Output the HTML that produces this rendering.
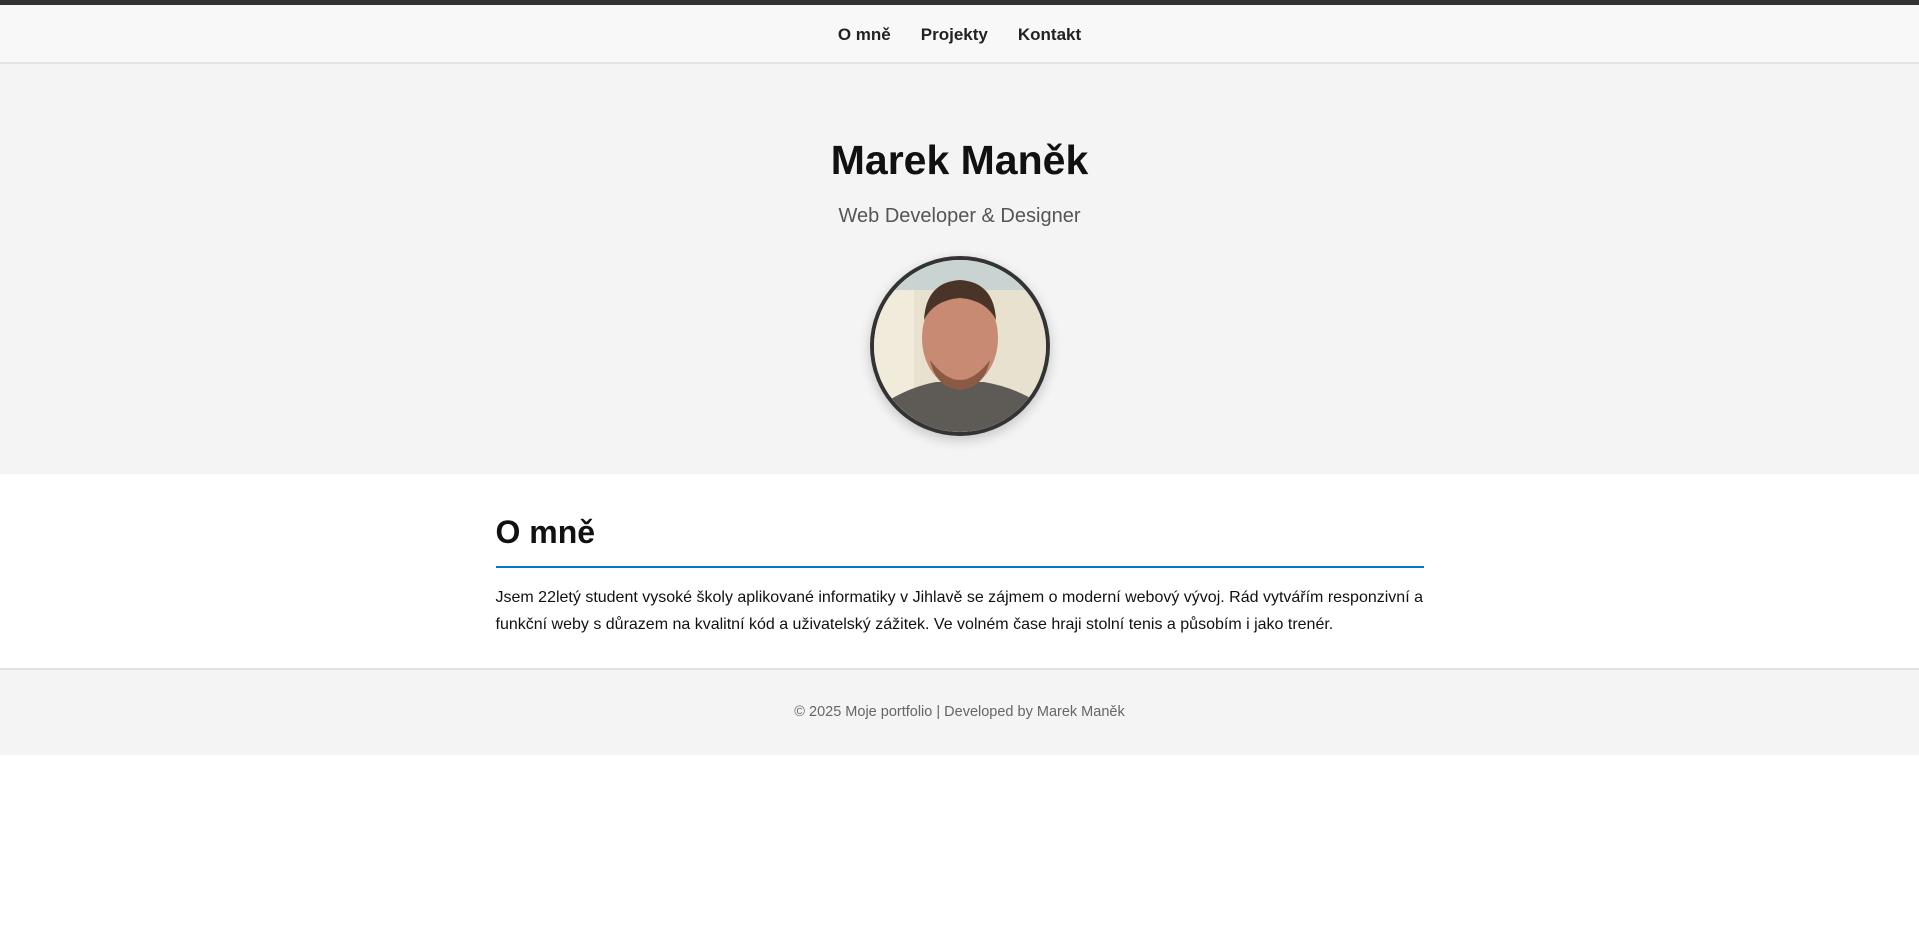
<!DOCTYPE html>
<html lang="cs"><head><meta charset="utf-8"><style>
*{margin:0;padding:0;box-sizing:border-box}
body{width:1919px;height:948px;background:#fff;font-family:"Liberation Sans",Arial,sans-serif;color:#111;overflow:hidden}
.top{height:5px;background:#333}
nav{height:59px;background:#f8f8f8;border-bottom:2px solid #e2e2e2;display:flex;justify-content:center;align-items:center;gap:0}
nav a{font-weight:bold;font-size:17px;color:#222;text-decoration:none;margin:0 15px;position:relative;top:1px}
.hero{background:#f4f4f4;height:410px;text-align:center;position:relative}
.hero h1{position:absolute;left:0;right:0;top:71px;font-size:41px;line-height:50px;font-weight:bold;color:#111}
.hero p{position:absolute;left:0;right:0;top:139px;font-size:20px;line-height:26px;color:#555}
.photo{position:absolute;left:870px;top:192px;width:180px;height:180px;border-radius:50%;border:4px solid #333;overflow:hidden;box-shadow:0 4px 12px rgba(0,0,0,.2)}
.about{width:928px;margin:0 auto;position:relative;height:194px}
.about h2{position:absolute;top:38px;font-size:32px;line-height:40px;font-weight:bold}
.about .line{position:absolute;top:92px;left:0;right:0;height:2px;background:#0077cc}
.about p{position:absolute;top:111px;left:0;right:0;font-size:16px;line-height:26.5px;color:#111}
footer{border-top:2px solid #e2e2e2;background:#f4f4f4;height:87px;text-align:center;font-size:14.5px;color:#666;padding-top:34px}
</style></head><body>
<div class="top"></div>
<nav><a>O mně</a><a>Projekty</a><a>Kontakt</a></nav>
<div class="hero">
<h1>Marek Maněk</h1>
<p>Web Developer &amp; Designer</p>
<div class="photo"><svg width="172" height="172" viewBox="0 0 172 172">
<rect width="172" height="172" fill="#e9e1cf"/>
<rect width="172" height="30" fill="#c9d3d2"/>
<rect x="0" y="30" width="40" height="142" fill="#f1ebdc"/>
<path d="M0 172 L0 150 Q30 128 62 122 L110 122 Q145 128 172 148 L172 172Z" fill="#5e5a55"/>
<ellipse cx="86" cy="78" rx="38" ry="50" fill="#c98a74"/>
<path d="M50 60 Q52 22 86 20 Q120 22 122 60 Q112 40 86 38 Q60 40 50 60Z" fill="#4a3428"/>
<path d="M56 100 Q86 140 116 100 Q110 128 86 130 Q62 128 56 100Z" fill="#8a5a45"/>
</svg></div>
</div>
<div class="about">
<h2>O mně</h2>
<div class="line"></div>
<p>Jsem 22letý student vysoké školy aplikované informatiky v Jihlavě se zájmem o moderní webový vývoj. Rád vytvářím responzivní a funkční weby s důrazem na kvalitní kód a uživatelský zážitek. Ve volném čase hraji stolní tenis a působím i jako trenér.</p>
</div>
<footer>© 2025 Moje portfolio | Developed by Marek Maněk</footer>
</body></html>
